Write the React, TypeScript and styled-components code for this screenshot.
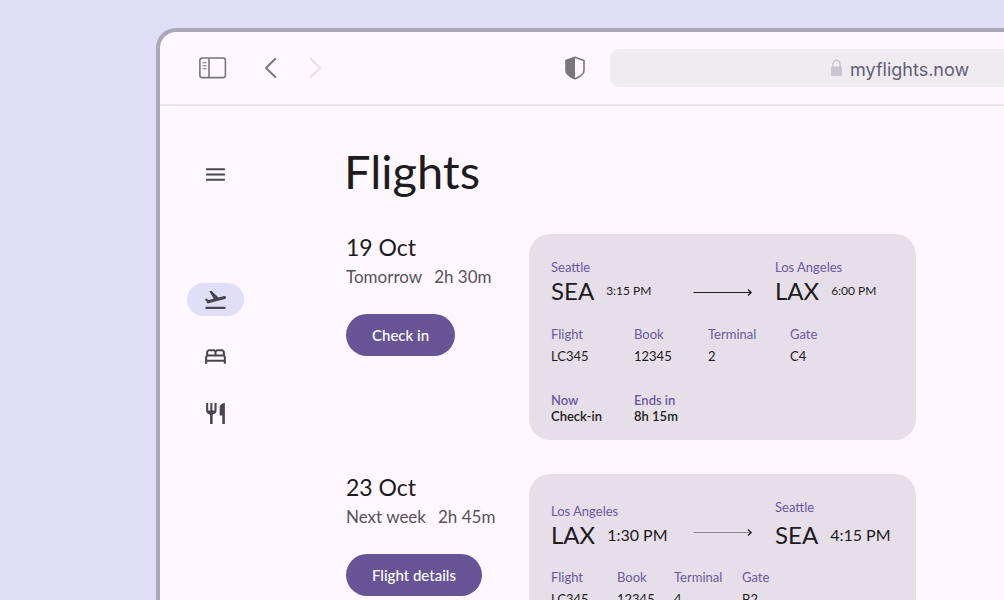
import React from "react";
import styled, { createGlobalStyle } from "styled-components";
import { MdMenu, MdFlightTakeoff, MdOutlineBed, MdRestaurant } from "react-icons/md";

const GlobalStyle = createGlobalStyle`
  *, *::before, *::after { box-sizing: border-box; }
  html { scrollbar-width: none; }
  body {
    margin: 0;
    background: #e1dff7;
    color: #1d1b20;
    font-family: Lato, "Liberation Sans", sans-serif;
  }
  h1, h2, p, dl, dd { margin: 0; }
  button { font-family: inherit; }
`;

const Page = styled.div`
  min-height: 100vh;
  padding: 28px 0 0 156px;
  display: flex;
  overflow: hidden;
`;

const BrowserWindow = styled.div`
  flex: 1;
  min-width: 0;
  background: #fef7ff;
  border: solid #a9a7b8;
  border-width: 4px 0 0 4px;
  border-top-left-radius: 20px;
`;

const Toolbar = styled.header`
  display: flex;
  align-items: center;
  height: 74px;
  padding-left: 38px;
  border-bottom: 2px solid #ebe4ed;
`;

const ToolButton = styled.button<{ $gap?: number }>`
  display: flex;
  padding: 0;
  border: 0;
  background: none;
  margin-left: ${(p) => p.$gap ?? 0}px;
`;

const AddressBar = styled.form`
  flex: 1;
  min-width: 0;
  display: flex;
  align-items: center;
  gap: 7px;
  height: 38px;
  margin-left: 24px;
  padding-left: 220px;
  background: #f0ebf1;
  border-radius: 9px 0 0 9px;
`;

const AddressInput = styled.input`
  flex: 1;
  min-width: 0;
  height: 26px;
  padding: 2px 0 0;
  border: 0;
  outline: 0;
  background: none;
  color: #5f5d76;
  font: 400 18px/24px Inter, sans-serif;
`;

const Body = styled.div`
  display: flex;
  align-items: flex-start;
`;

const Rail = styled.nav`
  display: flex;
  flex-direction: column;
  gap: 24px;
  padding: 52px 100px 0 27px;
`;

const RailButton = styled.button<{ $active?: boolean; $space?: number }>`
  display: flex;
  align-items: center;
  justify-content: center;
  width: 57px;
  height: 33px;
  padding: 0;
  border: 0;
  border-radius: 17px;
  color: #49454f;
  background: ${(p) => (p.$active ? "#e1dff7" : "none")};
  margin-bottom: ${(p) => p.$space ?? 0}px;
`;

const Main = styled.main`
  flex: 1;
  min-width: 0;
  padding: 35px 0;
`;

const Title = styled.h1`
  font-size: 47px;
  line-height: 60px;
  font-weight: 400;
  padding-bottom: 33px;
`;

const Trips = styled.div`
  display: flex;
  flex-direction: column;
  gap: 34px;
  padding-left: 2px;
`;

const Trip = styled.section`
  display: grid;
  grid-template-columns: 183px minmax(0, 387px);
`;

const TripDate = styled.h2`
  font-size: 23px;
  line-height: 27px;
  font-weight: 400;
`;

const TripMeta = styled.p`
  display: flex;
  gap: 12px;
  margin-top: 4px;
  font-size: 17px;
  line-height: 24px;
  color: #56525c;
`;

const Action = styled.button`
  height: 42px;
  margin-top: 25px;
  padding: 0 26px;
  border: 0;
  border-radius: 21px;
  background: #675496;
  color: #fff;
  font-size: 15px;
  font-weight: 500;
`;

const Card = styled.article`
  padding: 25px 22px 16px;
  background: #e6dfea;
  border-radius: 21px;
`;

const Route = styled.div`
  display: grid;
  grid-template-columns: 142px 82px auto;
  align-items: start;
`;

const Stop = styled.div<{ $top?: number }>`
  padding-top: ${(p) => p.$top ?? 0}px;
`;

const City = styled.p`
  font-size: 13px;
  line-height: 16px;
  color: #6b57a0;
`;

const CodeLine = styled.div<{ $top?: number }>`
  display: flex;
  align-items: center;
  gap: 12px;
  margin-top: ${(p) => p.$top ?? 0}px;
  white-space: nowrap;
`;

const Code = styled.span`
  font-size: 24px;
  line-height: 32px;
`;

const Time = styled.span<{ $large?: boolean }>`
  font-size: ${(p) => (p.$large ? 16 : 12)}px;
  line-height: 20px;
`;

const Arrow = styled.svg`
  margin-top: 28px;
`;

const Details = styled.dl<{ $columns: string; $top: number }>`
  display: grid;
  grid-template-columns: ${(p) => p.$columns};
  margin-top: ${(p) => p.$top}px;
`;

const Term = styled.dt<{ $strong?: boolean }>`
  font-size: 13px;
  line-height: 16px;
  font-weight: ${(p) => (p.$strong ? 600 : 400)};
  color: #6b57a0;
`;

const Value = styled.dd<{ $strong?: boolean }>`
  margin-top: ${(p) => (p.$strong ? 0 : 6)}px;
  font-size: 13px;
  line-height: 16px;
  font-weight: ${(p) => (p.$strong ? 600 : 400)};
`;

type Fact = [string, string];

function Facts({ items, columns, top, strong }: { items: Fact[]; columns: string; top: number; strong?: boolean }) {
  return (
    <Details $columns={columns} $top={top}>
      {items.map(([term, value]) => (
        <div key={term}>
          <Term $strong={strong}>{term}</Term>
          <Value $strong={strong}>{value}</Value>
        </div>
      ))}
    </Details>
  );
}

function RouteArrow({ color }: { color: string }) {
  return (
    <Arrow width="60" height="10" viewBox="0 0 60 10" fill="none" aria-hidden="true">
      <path d="M0.5 5.5H58" stroke={color} />
      <path d="M55 2.5L58.2 5.5L55 8.5" stroke="#1d1b20" strokeWidth="1.2" />
    </Arrow>
  );
}

export default function App() {
  return (
    <>
      <GlobalStyle />
      <Page>
        <BrowserWindow>
          <Toolbar>
            <ToolButton aria-label="Toggle sidebar">
              <svg width="30" height="24" viewBox="0 0 30 24" fill="none" stroke="#79747e">
                <rect x="1.9" y="2" width="25.5" height="19.6" rx="2.4" strokeWidth="1.6" />
                <path d="M11 2V21.6" strokeWidth="1.6" />
                <path d="M4.5 6.7H8.6M4.5 9.7H8.6M4.5 12.7H8.6" strokeWidth="1.1" />
              </svg>
            </ToolButton>
            <ToolButton aria-label="Back" $gap={34}>
              <svg width="18" height="24" viewBox="0 0 18 24" fill="none" stroke="#79747e" strokeWidth="1.9" strokeLinecap="round" strokeLinejoin="round">
                <path d="M13.3 2.8L4 12L13.3 21" />
              </svg>
            </ToolButton>
            <ToolButton aria-label="Forward" $gap={26}>
              <svg width="18" height="24" viewBox="0 0 18 24" fill="none" stroke="#e7e0ec" strokeWidth="1.9" strokeLinecap="round" strokeLinejoin="round">
                <path d="M4.7 2.8L14 12L4.7 21" />
              </svg>
            </ToolButton>
            <ToolButton aria-label="Privacy report" $gap={240}>
              <svg width="22" height="24" viewBox="0 0 22 24" fill="none">
                <path d="M11 1.2L20 4.4V14.5C20 18 15.5 21 11 22.8C6.5 21 2 18 2 14.5V4.4Z" stroke="#79747e" strokeWidth="1.6" strokeLinejoin="round" />
                <path d="M11 1.2V22.8C6.5 21 2 18 2 14.5V4.4Z" fill="#79747e" />
              </svg>
            </ToolButton>
            <AddressBar>
              <svg width="13" height="18" viewBox="0 0 13 18" fill="none" aria-hidden="true">
                <rect x="1" y="7.5" width="11" height="9.5" rx="1.5" fill="#cac4d0" />
                <path d="M3 8V5A3.5 3.7 0 0 1 10 5V8" stroke="#cac4d0" strokeWidth="1.4" />
              </svg>
              <AddressInput aria-label="Address" defaultValue="myflights.now" />
            </AddressBar>
          </Toolbar>
          <Body>
            <Rail aria-label="Main">
              <RailButton aria-label="Menu" $space={68}><MdMenu size={25} /></RailButton>
              <RailButton aria-label="Flights" $active><MdFlightTakeoff size={25} /></RailButton>
              <RailButton aria-label="Hotels"><MdOutlineBed size={25} /></RailButton>
              <RailButton aria-label="Restaurants"><MdRestaurant size={25} /></RailButton>
            </Rail>
            <Main>
              <Title>Flights</Title>
              <Trips>
                <Trip>
                  <div>
                    <TripDate>19 Oct</TripDate>
                    <TripMeta><span>Tomorrow</span><span>2h 30m</span></TripMeta>
                    <Action>Check in</Action>
                  </div>
                  <Card>
                    <Route>
                      <Stop>
                        <City>Seattle</City>
                        <CodeLine><Code>SEA</Code><Time>3:15 PM</Time></CodeLine>
                      </Stop>
                      <RouteArrow color="#1d1b20" />
                      <Stop>
                        <City>Los Angeles</City>
                        <CodeLine><Code>LAX</Code><Time>6:00 PM</Time></CodeLine>
                      </Stop>
                    </Route>
                    <Facts
                      columns="83px 74px 82px auto"
                      top={19}
                      items={[["Flight", "LC345"], ["Book", "12345"], ["Terminal", "2"], ["Gate", "C4"]]}
                    />
                    <Facts columns="83px auto" top={28} strong items={[["Now", "Check-in"], ["Ends in", "8h 15m"]]} />
                  </Card>
                </Trip>
                <Trip>
                  <div>
                    <TripDate>23 Oct</TripDate>
                    <TripMeta><span>Next week</span><span>2h 45m</span></TripMeta>
                    <Action>Flight details</Action>
                  </div>
                  <Card>
                    <Route>
                      <Stop $top={4}>
                        <City>Los Angeles</City>
                        <CodeLine><Code>LAX</Code><Time $large>1:30 PM</Time></CodeLine>
                      </Stop>
                      <RouteArrow color="#8d8892" />
                      <Stop>
                        <City>Seattle</City>
                        <CodeLine $top={4}><Code>SEA</Code><Time $large>4:15 PM</Time></CodeLine>
                      </Stop>
                    </Route>
                    <Facts
                      columns="66px 57px 68px auto"
                      top={18}
                      items={[["Flight", "LC345"], ["Book", "12345"], ["Terminal", "4"], ["Gate", "B2"]]}
                    />
                  </Card>
                </Trip>
              </Trips>
            </Main>
          </Body>
        </BrowserWindow>
      </Page>
    </>
  );
}
